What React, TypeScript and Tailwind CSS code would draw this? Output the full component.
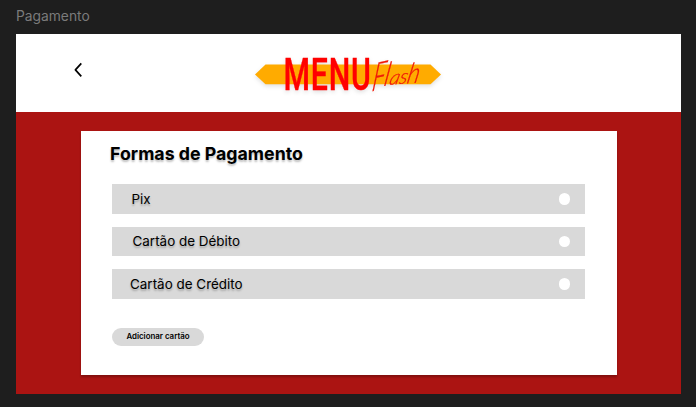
function Logo() {
  return (
    <svg
      width="205"
      height="55"
      viewBox="0 0 205 55"
      className="drop-shadow-[0_2px_2px_rgba(0,0,0,0.12)]"
      role="img"
      aria-label="Menu Flash"
    >
      <path d="M10 29.5 20.5 19.5H185.5L196 29.5 185.5 39.2H20.5Z" fill="#ffab00" />
      <text
        transform="translate(38.6 44.8) scale(.69 1)"
        className="fill-[#ff0000] stroke-[#ff0000] stroke-[0.4] font-['Roboto',sans-serif] text-[44px] font-medium tracking-[1px]"
      >
        MENU
      </text>
      <g className="fill-[#f01808] stroke-[#f01808] stroke-[0.3] font-['Lato',sans-serif] font-light italic">
        <text transform="translate(126 46.5) rotate(-12) skewX(-20) scale(.66 1)" fontSize="38">
          F
        </text>
        <text transform="translate(138 41) rotate(-4) skewX(-14) scale(.8 1)" fontSize="33">
          l
        </text>
        <text transform="translate(143.5 40) rotate(-6) skewX(-20) scale(1.02 1)" fontSize="20">
          as
        </text>
        <text transform="translate(161 38.5) rotate(-4) skewX(-16) scale(.85 1)" fontSize="28">
          h
        </text>
      </g>
    </svg>
  );
}

const methods = [
  { label: "Pix", indent: "pl-[19.5px]" },
  { label: "Cartão de Débito", indent: "pl-[20.5px]" },
  { label: "Cartão de Crédito", indent: "pl-[18px]" },
];

export default function App() {
  return (
    <div className="h-[407px] w-[696px] overflow-hidden bg-[#1e1e1e] pl-4 font-['Inter',sans-serif] text-black">
      <div className="h-[34px] pt-[6px] text-[13.8px] leading-5 text-[#7b7b7b]">Pagamento</div>
      <main className="h-[360px] w-[665px] bg-[#ab1412]">
        <header className="flex h-[78px] items-start bg-white">
          <button aria-label="Voltar" className="ml-[57px] mt-[28px] block">
            <svg width="10" height="16" viewBox="0 0 10 16" fill="none" stroke="#000" strokeWidth="1.7">
              <path d="M8.3 1.4 2.4 7.9 8.3 14.4" strokeLinejoin="round" />
            </svg>
          </button>
          <div className="ml-[162px] mt-[11px]">
            <Logo />
          </div>
        </header>
        <section className="ml-[65px] mt-[19.4px] h-[243.6px] w-[535.5px] bg-white pl-[31px] pt-[10.8px] shadow-[0_2px_2px_rgba(0,0,0,0.25)]">
          <h1 className="-ml-[2px] h-[41.8px] text-[17.75px] font-bold leading-6 [text-shadow:0_2px_2px_rgba(0,0,0,0.25)]">
            Formas de Pagamento
          </h1>
          <div className="flex flex-col gap-[13px]">
            {methods.map((m) => (
              <label
                key={m.label}
                className={`flex h-[29.7px] w-[473px] items-center justify-between bg-[#d9d9d9] pr-[15px] text-[13.45px] [text-shadow:0_2px_2px_rgba(0,0,0,0.25)] ${m.indent}`}
              >
                {m.label}
                <span className="size-[11.5px] rounded-full bg-white" />
              </label>
            ))}
          </div>
          <button className="mt-[29px] flex h-[17.5px] w-[92px] items-center justify-center rounded-full bg-[#d9d9d9] text-[7.9px] font-semibold">
            Adicionar cartão
          </button>
        </section>
      </main>
    </div>
  );
}
